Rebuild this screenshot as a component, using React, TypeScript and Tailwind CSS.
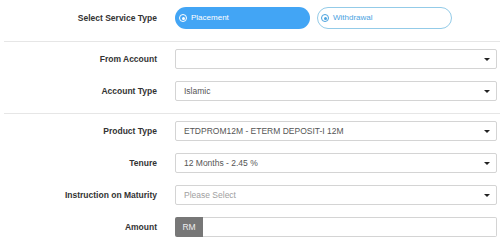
import React from 'react';

const font = { fontFamily: '"Liberation Sans", Arial, sans-serif' };

function Caret() {
  return <span className="w-0 h-0 border-x-[3px] border-x-transparent border-t-[3px] border-t-[#222] mr-[6px]" />;
}

function Dot({ active }: { active: boolean }) {
  return (
    <span
      className={
        'w-[8px] h-[8px] rounded-full border-[1.5px] flex items-center justify-center ' +
        (active ? 'border-white' : 'border-[#4aa3df]')
      }
    >
      <span className={'w-[3px] h-[3px] rounded-full ' + (active ? 'bg-white' : 'bg-[#4aa3df]')} />
    </span>
  );
}

function Row({ label, children }: { label: string; children: React.ReactNode }) {
  return (
    <div className="flex items-center h-[20px] pr-[3px]">
      <div className="w-[153px] text-right text-[8.5px] font-bold text-[#333]">{label}</div>
      <div className="ml-[18px] flex-1 h-full">{children}</div>
    </div>
  );
}

function Select({ value, placeholder }: { value?: string; placeholder?: boolean }) {
  return (
    <div className="h-full border border-[#d4d4d4] rounded-[2px] bg-white flex items-center justify-between pl-[8px]">
      <span className={'text-[8.5px] ' + (placeholder ? 'text-[#a0a0a0]' : 'text-[#555]')}>{value}</span>
      <Caret />
    </div>
  );
}

export default function App() {
  return (
    <div className="w-[500px] h-[247px] bg-white pt-[7px] pl-[4px]" style={font}>
      <div className="flex items-center h-[22px] pr-[3px]">
        <div className="w-[153px] text-right text-[8.5px] font-bold text-[#333]">Select Service Type</div>
        <div className="ml-[18px] flex gap-[7px]">
          <button className="w-[135px] h-[22px] rounded-full bg-[#42a5f5] flex items-center gap-[4px] pl-[4px] text-white text-[8px]">
            <Dot active />
            Placement
          </button>
          <button className="w-[135px] h-[22px] rounded-full border border-[#93cbe8] bg-white flex items-center gap-[4px] pl-[3px] text-[#4aa3df] text-[8px]">
            <Dot active={false} />
            Withdrawal
          </button>
        </div>
      </div>

      <div className="mt-[12px] mb-[7px] border-t border-[#e6e6e6]" />

      <div className="flex flex-col gap-[12px]">
        <Row label="From Account">
          <Select value="" />
        </Row>
        <Row label="Account Type">
          <Select value="Islamic" />
        </Row>
      </div>

      <div className="mt-[12px] mb-[7px] border-t border-[#e6e6e6]" />

      <div className="flex flex-col gap-[12px]">
        <Row label="Product Type">
          <Select value="ETDPROM12M - ETERM DEPOSIT-I 12M" />
        </Row>
        <Row label="Tenure">
          <Select value="12 Months - 2.45 %" />
        </Row>
        <Row label="Instruction on Maturity">
          <Select value="Please Select" placeholder />
        </Row>
        <Row label="Amount">
          <div className="h-full flex">
            <div className="w-[28px] h-full bg-[#777] rounded-l-[2px] flex items-center justify-center text-[8.5px] text-[#eee]">
              RM
            </div>
            <input className="flex-1 h-full border border-l-0 border-[#d4d4d4] rounded-r-[2px] outline-none" />
          </div>
        </Row>
      </div>
    </div>
  );
}
